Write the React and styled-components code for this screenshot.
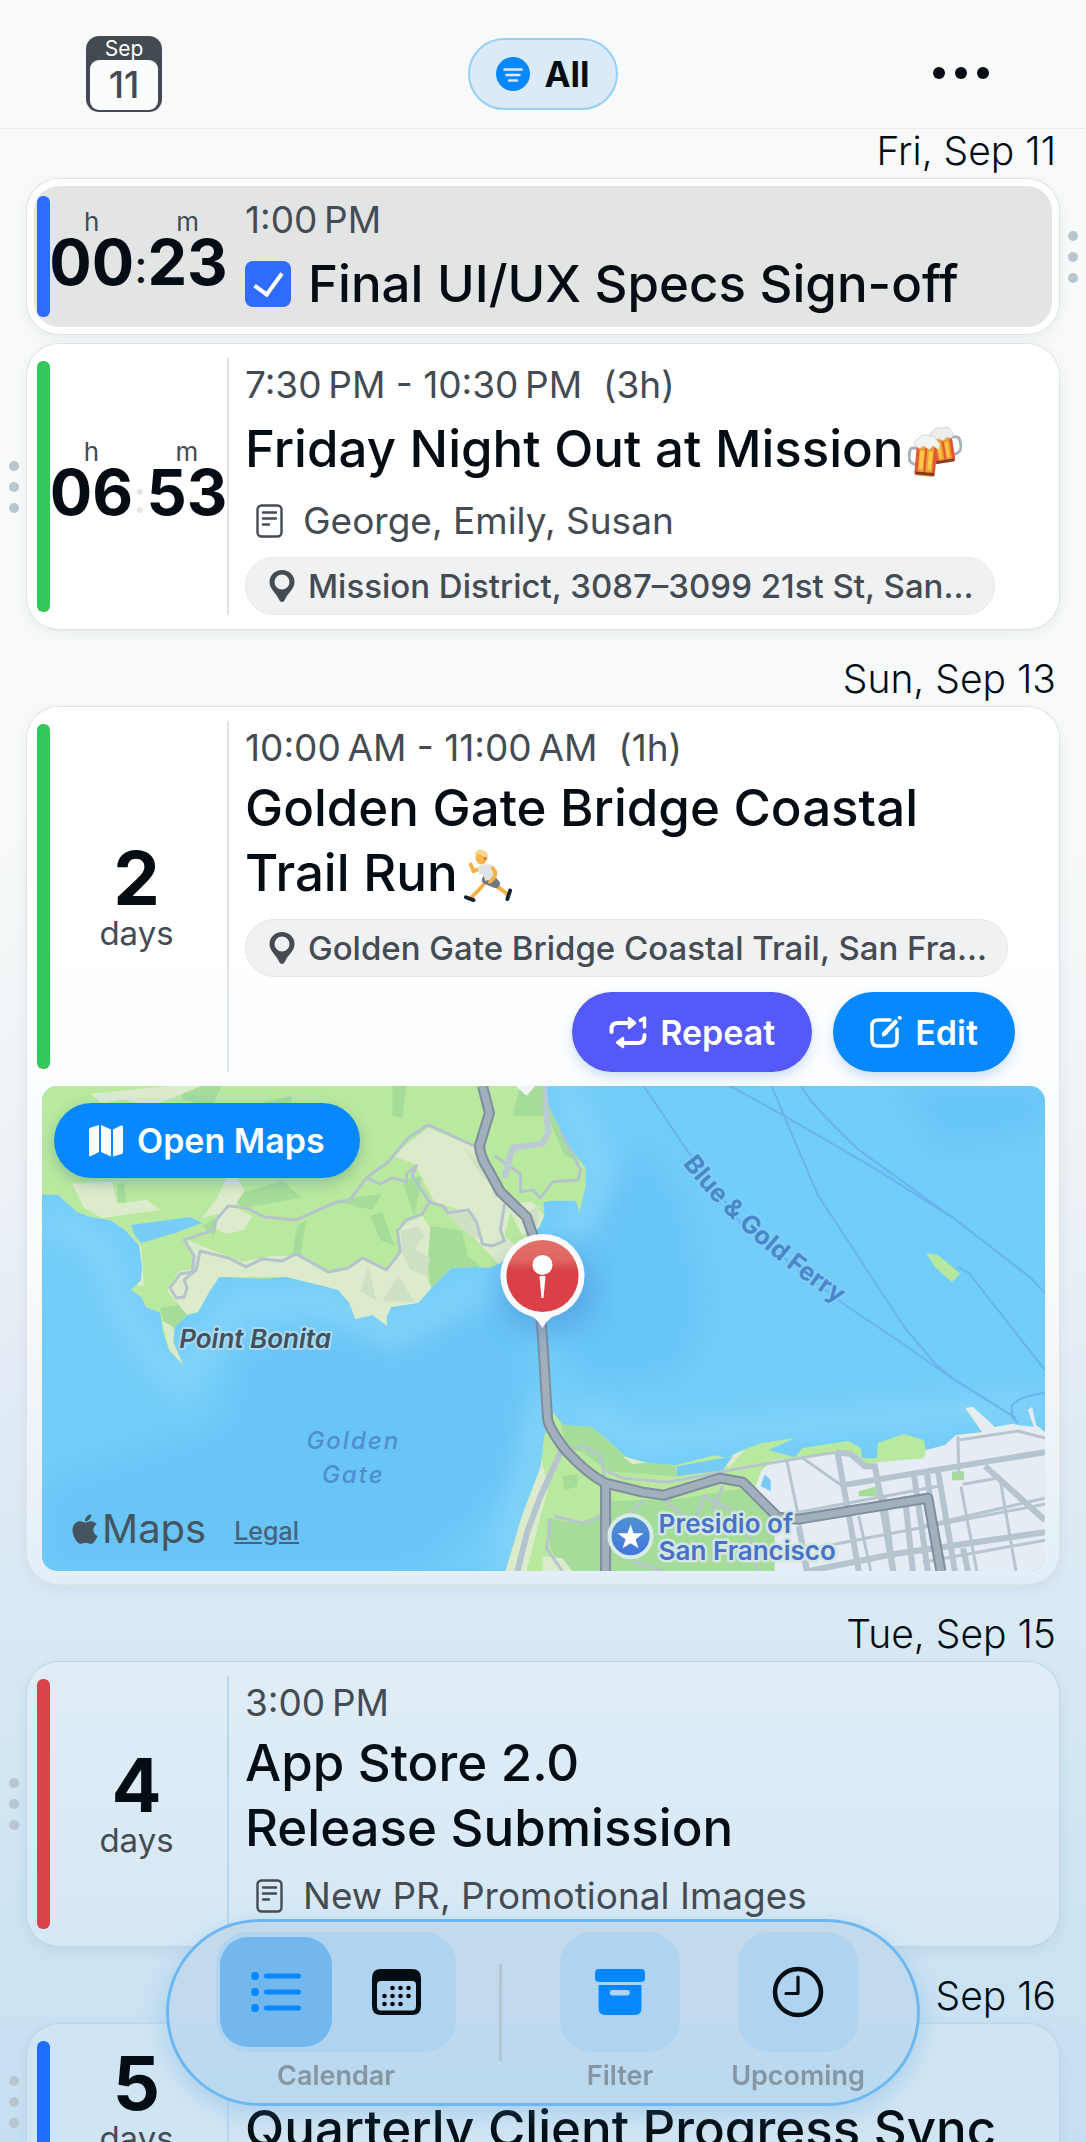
import React, { useState } from "react";
import styled, { createGlobalStyle } from "styled-components";
import { FaApple } from "react-icons/fa";

const BLUE = "#0788ff";
const INK = "#040d14";
const MUTED = "#444b53";

export default function App() {
  //state
  const [view, setView] = useState("list");
  const [isDone, setIsDone] = useState(true);

  //affichage
  return (
    <>
      <GlobalStyle />
      <AppStyled>
        <Header>
          <TodayButton type="button" aria-label="Go to today">
            <span className="month">Sep</span>
            <span className="day">11</span>
          </TodayButton>
          <FilterButton type="button">
            <FilterIcon />
            All
          </FilterButton>
          <MoreButton type="button" aria-label="More">
            <MoreIcon />
          </MoreButton>
        </Header>

        <Agenda>
          <Section>
            <DateTitle>Fri, Sep 11</DateTitle>
            <Event color="#2f6bff" hours="00" minutes="23" tone="done" handle="right">
              <Time>1:00&#8201;PM</Time>
              <Title>
                <CheckLabel>
                  <Checkbox
                    type="checkbox"
                    checked={isDone}
                    onChange={(event) => setIsDone(event.target.checked)}
                  />
                  Final UI/UX Specs Sign-off
                </CheckLabel>
              </Title>
            </Event>
            <Event color="#34c759" hours="06" minutes="53" dimColon handle="left">
              <Time>7:30&#8201;PM - 10:30&#8201;PM&nbsp; (3h)</Time>
              <Title>
                <span>
                  Friday Night Out at Mission
                  <BeersIcon />
                </span>
              </Title>
              <Note>
                <NoteIcon />
                George, Emily, Susan
              </Note>
              <Place href="#mission">
                <PlaceIcon />
                Mission District, 3087–3099 21st St, San...
              </Place>
            </Event>
          </Section>

          <Section>
            <DateTitle>Sun, Sep 13</DateTitle>
            <Event color="#34c759" days="2" tone="fade" footer={<MapPreview />}>
              <Time>10:00&#8201;AM - 11:00&#8201;AM&nbsp; (1h)</Time>
              <Title>
                <span>
                  Golden Gate Bridge Coastal
                  <br />
                  Trail Run
                  <RunnerIcon />
                </span>
              </Title>
              <Place href="#golden-gate">
                <PlaceIcon />
                Golden Gate Bridge Coastal Trail, San Fra...
              </Place>
              <Actions>
                <ActionButton type="button" $color="#5459f7">
                  <RepeatIcon />
                  Repeat
                </ActionButton>
                <ActionButton type="button" $color={BLUE}>
                  <EditIcon />
                  Edit
                </ActionButton>
              </Actions>
            </Event>
          </Section>

          <Section>
            <DateTitle>Tue, Sep 15</DateTitle>
            <Event color="#d9434a" days="4" tone="sky" handle="left">
              <Time>3:00&#8201;PM</Time>
              <Title>
                <span>
                  App Store 2.0
                  <br />
                  Release Submission
                </span>
              </Title>
              <Note $last>
                <NoteIcon />
                New PR, Promotional Images
              </Note>
            </Event>
          </Section>

          <Section>
            <DateTitle>Sep 16</DateTitle>
            <Event color="#1f6dff" days="5" tone="deep" handle="left">
              <Time />
              <Title>Quarterly Client Progress Sync</Title>
            </Event>
          </Section>
        </Agenda>

        <Dock>
          <DockItem>
            <Segmented>
              <Segment
                type="button"
                aria-label="List view"
                $active={view === "list"}
                onClick={() => setView("list")}
              >
                <ListIcon />
              </Segment>
              <Segment
                type="button"
                aria-label="Month view"
                $active={view === "month"}
                onClick={() => setView("month")}
              >
                <MonthIcon />
              </Segment>
            </Segmented>
            Calendar
          </DockItem>
          <DockDivider />
          <DockItem>
            <DockButton type="button" aria-label="Filter">
              <ArchiveIcon />
            </DockButton>
            Filter
          </DockItem>
          <DockItem>
            <DockButton type="button" aria-label="Upcoming">
              <ClockIcon />
            </DockButton>
            Upcoming
          </DockItem>
        </Dock>
      </AppStyled>
    </>
  );
}

function Event({ color, hours, minutes, days, tone, handle, dimColon, footer, children }) {
  return (
    <EventRow>
      <Gutter>{handle === "left" && <Dots />}</Gutter>
      <Card $tone={tone}>
        <CardMain>
          <ColorBar $color={color} />
          {days ? (
            <Days $tone={tone}>
              <strong>{days}</strong>
              <span>days</span>
            </Days>
          ) : (
            <Countdown $tone={tone} $dimColon={dimColon}>
              <div className="clock">
                <div className="unit">
                  <span>h</span>
                  <strong>{hours}</strong>
                </div>
                <i>:</i>
                <div className="unit">
                  <span>m</span>
                  <strong>{minutes}</strong>
                </div>
              </div>
            </Countdown>
          )}
          <Details>{children}</Details>
        </CardMain>
        {footer}
      </Card>
      <Gutter>{handle === "right" && <Dots />}</Gutter>
    </EventRow>
  );
}

function Dots() {
  return (
    <DotsStyled aria-hidden="true">
      <b />
      <b />
      <b />
    </DotsStyled>
  );
}

function MapPreview() {
  return (
    <MapStyled>
      <MapDrawing />
      <OpenMaps type="button">
        <MapIcon />
        Open Maps
      </OpenMaps>
      <MapCredit>
        <FaApple size={34} />
        <span>Maps</span>
        <a href="#legal">Legal</a>
      </MapCredit>
    </MapStyled>
  );
}

function MapDrawing() {
  const marin =
    "M0 0V109H16L35 126L49 131L68 134L83 144L97 159L100 181L99 194L89 204L99 211L104 221L118 227L121 247L127 264L141 279L131 256L133 241L145 229L156 226L167 206L177 191L221 193L244 191L277 199L296 204L307 217L313 233L330 229L345 240L344 231L349 221L376 217L389 202L409 182L432 181L447 182L458 177L470 164L491 147L497 141L502 129L501 117L508 115H533L537 126L543 101V82L527 61L518 44L506 21L504 0Z";
  const city =
    "M511 327L521 339L549 341L565 354L584 371L606 377L633 379L672 369L684 372L700 364L719 357L752 352L726 364L752 371L760 362L805 355L818 362L819 372H834L835 357L861 348L881 354L883 364L902 359L913 349L939 346L922 322L930 321L952 341L969 338L991 341L985 324L989 321L993 339L1002 346V485H463L479 431L498 381L502 349Z";
  const highway =
    "M440 0L447 27L437 60Q438 72 446 84L458 106L484 131L491 151L500 251L505 332Q506 342 523 364Q545 388 563 397L600 406L621 409L677 392L700 396L735 431L756 433L885 412L898 485";

  return (
    <svg viewBox="0 0 1002 485" preserveAspectRatio="xMidYMid slice" role="img" aria-label="Map">
      <defs>
        <clipPath id="marin">
          <path d={marin} />
        </clipPath>
        <clipPath id="city">
          <path d={city} />
        </clipPath>
        <filter id="soft" x="-20%" y="-20%" width="140%" height="140%">
          <feGaussianBlur stdDeviation="14" />
        </filter>
        <linearGradient id="pin" x1="0" y1="0" x2="0" y2="1">
          <stop offset="0" stopColor="#e27069" />
          <stop offset="0.28" stopColor="#e06661" />
          <stop offset="0.42" stopColor="#d94247" />
          <stop offset="1" stopColor="#d94047" />
        </linearGradient>
        <linearGradient id="star" x1="0" y1="0" x2="0" y2="1">
          <stop offset="0" stopColor="#4f94cf" />
          <stop offset="1" stopColor="#4274e0" />
        </linearGradient>
      </defs>

      <rect width="1002" height="485" fill="#71cdf9" />
      <g filter="url(#soft)">
        <path d="M530 130L600 60L640 120L660 220L640 280L560 300L520 270Z" fill="#66c4f6" />
        <path d="M200 260L480 210L490 300L470 400L380 485H0V400L180 340Z" fill="#67c5f6" />
        <path d="M860 0H1002V40L900 60Z" fill="#66c4f6" />
        <g fill="none" stroke="#85d3f9" strokeWidth="26">
          <path d="M0 130L60 160L80 220L110 270L140 300L190 220L280 215L350 250L440 200" />
          <path d="M520 0L560 90L530 150" />
          <path d="M500 310L490 370L460 485" />
          <path d="M530 325L600 355L740 340L860 330L1002 320" />
        </g>
      </g>

      {/* ferry routes */}
      <g fill="none" stroke="#6bb4ef" strokeWidth="2">
        <path d="M601 0L644 64L700 140L805 221L853 253L909 292L973 332" />
        <path d="M729 0L743 34L775 109L862 242L892 277L909 292" />
        <path d="M687 0L745 32L831 82L913 134L988 192L1002 207" />
        <path d="M758 0L769 16Q790 40 816 64L892 119L913 134" />
        <path d="M915 181L926 187L980 256L1002 284" />
        <path d="M1002 307Q975 310 969 320V331L975 337" />
      </g>
      <path d="M883 167L895 169L912 183L917 188L909 196L893 182Z" fill="#b6e89e" />

      {/* marin headlands */}
      <path d={marin} fill="#b9e99f" />
      <g clipPath="url(#marin)">
        <g fill="#a5dc9a">
          <path d="M140 0H180L170 20L140 14ZM350 0H364L360 32L350 30ZM205 20L250 10L246 30ZM478 0H504L518 44L540 76L522 70L505 30L470 30ZM190 110L240 95L260 112L200 122ZM290 115L340 108L330 124ZM328 130L340 126L352 160L338 154ZM255 140L264 134L258 170L250 168Z" />
          <path d="M388 140L420 145L425 170L440 182L409 182L389 202L385 175ZM160 140L178 130L172 150ZM75 100L82 96L84 116H76ZM118 222L160 215L150 232L124 245ZM360 95L380 90L372 130Z" />
        </g>
        <g fill="#dcebcb">
          <path d="M48 8L130 0H160L110 20L80 14L60 18ZM30 98L70 96L75 118L105 114L118 124L60 132L42 122ZM185 90L196 92L202 106L190 124L160 132L175 112ZM176 128L190 120L210 130L202 144L184 148L172 142Z" />
          <path d="M350 70L386 42L434 62L452 100L470 118L462 150L476 162L458 180L430 150L420 125L392 116L372 78Z" />
          <path d="M145 154L165 162L200 176L230 170L258 170L288 186L304 182L318 172L344 182L358 164L356 140L380 130L388 142L384 190L389 202L376 217L349 221L345 240L313 233L296 204L244 191L177 191L156 226L145 229L125 205L136 186L154 182Z" />
          <path d="M462 118L490 116L502 130L496 142L480 150L470 130ZM16 109L35 126L49 131L68 134L83 144L99 160L102 200H96V175L84 154L60 134L30 128ZM120 235L130 240L141 279L127 264Z" />
        </g>
        <g fill="#cfe0c5">
          <path d="M420 60L448 88L456 100L440 92ZM436 68L460 108L452 112ZM400 122L432 128L440 152L428 150L412 136ZM358 145L376 140L382 150L372 162L388 172L384 190L368 184L360 168ZM318 205L326 180L334 215ZM340 215L356 190L372 216ZM480 130L498 118L494 142Z" />
        </g>
        <g fill="none" stroke="#b5c3cd" strokeWidth="3" strokeLinejoin="round">
          <path d="M434 61L386 39L366 52L346 76L324 92L312 108L308 114L292 117L254 134L222 131L204 122L186 120L174 134L172 144L142 154L152 170L150 186L138 188L128 202L134 212L142 211L145 202L142 194L154 184L158 165L186 172L204 181L220 173L240 175L254 168L286 186L306 182L320 172L344 184L358 166L355 145L364 134L380 128L387 116L370 90L374 80L364 88V96L350 92L338 98L324 92" />
          <path d="M387 116L400 120L406 127L426 124L434 136L440 158L450 160L462 155L458 144L462 118M452 70L478 88L478 106L490 104L498 112L510 96L536 94L538 84L518 46" />
        </g>
        <path d="M504 0L503 24L506 46L500 58L470 62L462 92" fill="none" stroke="#bccad6" strokeWidth="6" />
        <path d="M473 0H493L484 10Z" fill="#f1f4f4" />
      </g>
      <path d="M89 139L148 131L160 137L133 147L99 157L92 148Z" fill="#78cdf6" />

      {/* city side */}
      <path d={city} fill="#b9e99f" />
      <g clipPath="url(#city)">
        <path d="M515 325L549 341L584 371L633 379V390L565 385L540 366L524 362Z" fill="#a5dc9a" />
        <path d="M504 432L540 438L560 425V485H520L508 462ZM568 415L640 412L700 402L735 435V485H568ZM520 390L535 388V400L522 404Z" fill="#a5dc9a" />
        <path d="M498 370L506 400L484 485H463L479 431ZM500 470L520 472L530 485H500ZM580 370L606 376L590 378ZM680 368L702 364L686 382Z" fill="#dcebcb" />
        <path d="M719 384L730 374L793 368L805 366L820 378L834 376L881 372L883 364L902 359L913 349L939 346L920 318H1002V485H732V431L713 400Z" fill="#e5ecf3" />
        <path d="M722 388L728 394V405L718 400Z" fill="#76cbf5" />
        <path d="M816 405L834 400V410H816ZM909 385H921V394H909Z" fill="#a5dc9a" />
        <path d="M634 380L690 370L680 384L634 390Z" fill="#76cbf5" />
        <g fill="none" stroke="#b7c5cf" strokeWidth="3">
          <path d="M564 385L580 392L625 396L715 379L793 366M512 430L540 437L560 430M508 432L504 462L520 485M600 414L560 460M620 412L650 438L662 410L690 425M680 400L670 425M744 374L756 432L766 485M760 372L800 400M915 350L916 388M915 354L975 345L1002 352M756 426L895 400M740 438L760 430M760 464L1002 418M816 430L828 485M842 410L852 485M918 400L934 485M957 392L973 485M920 398L954 392M880 440L1002 412M880 476L1002 454M524 364L540 360L558 370L562 390M705 440L715 485M590 475L620 485" />
        </g>
        <g fill="none" stroke="#b5c4cf" strokeWidth="6">
          <path d="M800 399L1002 366M795 368L808 440L816 485M793 366L808 368L822 380H832L838 412L850 485M871 388L885 485M884 386L896 485M895 384L912 485M942 380L1002 434M765 485L850 468L1002 446M920 462L925 485M519 364L498 410L485 445L475 485M756 440L764 485M862 410L870 485" />
        </g>
      </g>

      {/* highway and bridge */}
      <g fill="none" strokeLinejoin="round">
        <path d={highway} stroke="#7f8d9c" strokeWidth="11" />
        <path d="M563 397V485" stroke="#7f8d9c" strokeWidth="11" />
        <path d={highway} stroke="#a2afbd" strokeWidth="7" />
        <path d="M563 397V485" stroke="#a2afbd" strokeWidth="7" />
      </g>

      {/* labels */}
      <g fontFamily="Inter, 'Liberation Sans', sans-serif" paintOrder="stroke" strokeLinejoin="round">
        <path id="ferry" d="M640 78Q706 164 830 240" fill="none" />
        <text fontSize="25" fontWeight="700" fill="#4888c9" stroke="#7fcdf6" strokeWidth="4">
          <textPath href="#ferry">Blue &amp; Gold Ferry</textPath>
        </text>
        <text x="137" y="262" fontSize="26" fontWeight="600" fontStyle="italic" fill="#42505c" stroke="#a9daf3" strokeWidth="4">
          Point Bonita
        </text>
        <g fontSize="24" fontWeight="500" fontStyle="italic" fill="#4f8ed0" textAnchor="middle" letterSpacing="2">
          <text x="311" y="363">Golden</text>
          <text x="311" y="397">Gate</text>
        </g>
        <g fontSize="26" fontWeight="600" fill="#4872c9" stroke="#d3e6e0" strokeWidth="5">
          <text x="616" y="447">Presidio of</text>
          <text x="616" y="474">San Francisco</text>
        </g>
      </g>
      <circle cx="588" cy="450" r="21" fill="url(#star)" stroke="#d9ebe6" strokeWidth="4" />
      <path d="M588 438L591 447H601L593 453L596 462L588 457L580 462L583 453L575 447H585Z" fill="#fff" />

      {/* pin */}
      <ellipse cx="504" cy="204" rx="46" ry="44" fill="#3c78c8" opacity="0.4" filter="url(#soft)" />
      <circle cx="500" cy="190" r="42" fill="#f8fafb" />
      <path d="M476 224Q494 230 500 242Q506 230 524 224Z" fill="#f8fafb" />
      <circle cx="500" cy="190" r="36" fill="url(#pin)" />
      <circle cx="500" cy="179" r="10" fill="#fff" />
      <path d="M497 190H503L501 212H499Z" fill="#fff" />
    </svg>
  );
}

//icônes
const FilterIcon = () => (
  <svg width="34" height="34" viewBox="0 0 34 34">
    <circle cx="17" cy="17" r="17" fill={BLUE} />
    <path d="M8.500 12.500H25.500M10.500 18H23.500M13 23.500H21" stroke="#daeaf6" strokeWidth="2.600" strokeLinecap="round" />
  </svg>
);

const MoreIcon = () => (
  <svg width="58" height="14" viewBox="0 0 58 14" fill={INK}>
    <circle cx="7" cy="7" r="6" />
    <circle cx="29" cy="7" r="6" />
    <circle cx="51" cy="7" r="6" />
  </svg>
);

const NoteIcon = () => (
  <svg width="27" height="34" viewBox="0 0 27 34" fill="none" stroke={MUTED} strokeWidth="2.400" strokeLinecap="round">
    <rect x="1.500" y="1.500" width="24" height="31" rx="4" />
    <path d="M7 8.500H20M7 14.500H20M7 20.500H13" />
  </svg>
);

const PlaceIcon = () => (
  <svg width="26" height="32" viewBox="0 0 26 32" fill={MUTED}>
    <path fillRule="evenodd" d="M13 0C20 0 25.500 5 25.500 12C25.500 19 19 23 16.500 28.500Q15 32 13 32Q11 32 9.500 28.500C7 23 .5 19 .5 12C.5 5 6 0 13 0ZM13 4.500A7.500 7.500 0 1 0 13 19.500A7.500 7.500 0 1 0 13 4.500Z" />
  </svg>
);

const RepeatIcon = () => (
  <svg width="38" height="34" viewBox="0 0 38 34" fill="none" stroke="#fff" strokeWidth="4" strokeLinecap="round" strokeLinejoin="round">
    <path d="M2.500 17V14Q2.500 8 9 8H18M35.500 20V21Q35.500 28 29 28H14" />
    <path d="M20 3V13L26 8ZM14 23V32L8 27.500Z" fill="#fff" strokeWidth="2.500" />
    <path d="M31.500 5.500L35.500 3V12" strokeWidth="3.500" />
  </svg>
);

const EditIcon = () => (
  <svg width="32" height="34" viewBox="0 0 32 34" fill="none" stroke="#fff" strokeLinecap="round">
    <path d="M20 5H8Q2 5 2 11V25Q2 31 8 31H21Q27 31 27 25V14" strokeWidth="3.500" />
    <path d="M14 19L25.500 7" strokeWidth="4.500" />
    <path d="M12.500 21L15 16.500L17 18.500Z" fill="#fff" strokeWidth="1" />
    <path d="M29.500 2.500L30 3" strokeWidth="3.500" />
  </svg>
);

const MapIcon = () => (
  <svg width="34" height="32" viewBox="0 0 34 32" fill="#fff">
    <path d="M0 4.500Q0 3 2 2.500L10 0V27L2 31Q0 32 0 30ZM12 0L22 4.500V31.500L12 27ZM24 4.500L32 .5Q34 0 34 2V27Q34 28.500 32.500 29L24 31.500Z" />
  </svg>
);

const ListIcon = () => (
  <svg width="50" height="42" viewBox="0 0 50 42" stroke={BLUE} strokeWidth="5" strokeLinecap="round">
    <path d="M15.500 5H47.500M15.500 21H47.500M15.500 37H47.500" />
    <g fill={BLUE} stroke="none">
      <circle cx="4" cy="5" r="4" />
      <circle cx="4" cy="21" r="4" />
      <circle cx="4" cy="37" r="4" />
    </g>
  </svg>
);

const MonthIcon = () => (
  <svg width="49" height="46" viewBox="0 0 49 46" fill={INK}>
    <path fillRule="evenodd" d="M9 0H40Q49 0 49 9V37Q49 46 40 46H9Q0 46 0 37V9Q0 0 9 0ZM9 12Q5 12 5 16V37Q5 41.500 9 41.500H40Q44 41.500 44 37V16Q44 12 40 12Z" />
    <g>
      <circle cx="20.500" cy="19" r="2.300" />
      <circle cx="28.500" cy="19" r="2.300" />
      <circle cx="36.500" cy="19" r="2.300" />
      <circle cx="12.500" cy="27" r="2.300" />
      <circle cx="20.500" cy="27" r="2.300" />
      <circle cx="28.500" cy="27" r="2.300" />
      <circle cx="36.500" cy="27" r="2.300" />
      <circle cx="12.500" cy="35" r="2.300" />
      <circle cx="20.500" cy="35" r="2.300" />
      <circle cx="28.500" cy="35" r="2.300" />
    </g>
  </svg>
);

const ArchiveIcon = () => (
  <svg width="50" height="46" viewBox="0 0 50 46" fill={BLUE}>
    <rect width="50" height="13" rx="4" />
    <path fillRule="evenodd" d="M3.500 16H46.500V39Q46.500 46 40 46H10Q3.500 46 3.500 39ZM17.500 21A2.700 2.700 0 0 0 17.500 26.500H32A2.700 2.700 0 0 0 32 21Z" />
  </svg>
);

const ClockIcon = () => (
  <svg width="52" height="52" viewBox="0 0 52 52" fill="none" stroke={INK} strokeLinecap="round" strokeLinejoin="round">
    <circle cx="26" cy="26" r="23" strokeWidth="4.500" />
    <path d="M26 11V27.500H14" strokeWidth="3.200" />
  </svg>
);

const BeersIcon = () => (
  <Emoji viewBox="0 0 56 56" role="img" aria-label="beers">
    <g transform="rotate(-9 38 24)">
      <path d="M46 14H50Q55 14 55 20V24Q55 31 46 32" fill="none" stroke="#a9b2bb" strokeWidth="3" />
      <path d="M26 10H47V36Q47 39 44 39H29Q26 39 26 36Z" fill="#ee9b2c" />
      <path d="M26 12H30V39H26ZM36 14H38V37H36ZM44 14H47V38H44Z" fill="#e0553c" />
      <path d="M31 18H34V34H31ZM39 18H42V34H39Z" fill="#f9c744" />
      <path d="M27 36H46V39H27Z" fill="#8b3c2c" />
      <path d="M25 14Q22 7 29 5Q32 0 38 3Q46 1 47 7Q51 12 46 15L42 13L38 16L32 13L29 16Z" fill="#eceeec" stroke="#cdd2d3" strokeWidth="0.800" />
    </g>
    <g transform="rotate(5 18 36)">
      <path d="M9 25H5Q1 25 1 30V35Q1 41 9 42" fill="none" stroke="#a9b2bb" strokeWidth="3" />
      <path d="M8 20H29V49Q29 53 26 53H11Q8 53 8 49Z" fill="#ef9d2b" />
      <path d="M8 22H11V52H8ZM17 24H19V50H17ZM26 22H29V52H26Z" fill="#e0553c" />
      <path d="M12 27H16V46H12ZM21 27H25V46H21Z" fill="#f9ca48" />
      <path d="M9 49H28V52H9Z" fill="#7e372a" />
      <path d="M7 23Q3 18 9 15Q12 9 19 11Q26 10 28 15Q34 18 30 24L25 21L21 25L15 22L11 25Z" fill="#f3f4f2" stroke="#cdd2d3" strokeWidth="0.800" />
    </g>
  </Emoji>
);

const RunnerIcon = () => (
  <Emoji viewBox="0 0 54 56" role="img" aria-label="runner">
    <g fill="none" strokeLinecap="round" strokeLinejoin="round">
      <path d="M21 37L16 43L9 50" stroke="#f3b246" strokeWidth="4" />
      <path d="M33 38L40 42L46 47" stroke="#f3b246" strokeWidth="4" />
      <path d="M3 50L11 53" stroke="#16222e" strokeWidth="4" />
      <path d="M49 43L46 52" stroke="#16222e" strokeWidth="4" />
      <path d="M16 21L11 23L8 16" stroke="#f3b246" strokeWidth="4" />
      <path d="M24 32L34 36L31 33" stroke="#707983" strokeWidth="9" />
    </g>
    <path d="M15 19Q23 13 32 18L33 31L23 33Q22 26 17 26Z" fill="#dfe3e4" />
    <path d="M31 20Q36 26 31 31L28 34" fill="none" stroke="#f3b246" strokeWidth="4" strokeLinecap="round" />
    <ellipse cx="19" cy="9" rx="6" ry="7" fill="#f6b64a" />
    <path d="M12 6Q14 -1 21 1Q28 4 25 12L22 8Q18 5 12 6Z" fill="#f3d98c" />
    <circle cx="23" cy="10" r="1.500" fill="#e2603c" />
  </Emoji>
);

//styles
const GlobalStyle = createGlobalStyle`
  * {
    box-sizing: border-box;
  }

  body {
    margin: 0;
    font-family: Inter, "Liberation Sans", sans-serif;
    color: ${INK};
  }

  button {
    border: none;
    padding: 0;
    font: inherit;
    color: inherit;
    cursor: pointer;
  }

  svg {
    flex-shrink: 0;
  }
`;

const AppStyled = styled.div`
  height: 100vh;
  overflow: hidden;
  display: flex;
  flex-direction: column;
  background: linear-gradient(#f8faf9 0%, #f8faf9 38%, #eff3f6 52%, #dfeaf4 68%, #d9e9f4 76%, #cce3f2 90%, #c6e0f2 100%);
`;

const Header = styled.header`
  flex-shrink: 0;
  height: 129px;
  padding: 20px 86px 0;
  border-bottom: 1px solid #eceeee;
  display: grid;
  grid-template-columns: 1fr auto 1fr;
  align-items: center;
`;

const TodayButton = styled.button`
  width: 76px;
  height: 76px;
  padding: 0 4px 4px;
  border-radius: 13px;
  background: #444a52;
  display: flex;
  flex-direction: column;

  .month {
    height: 24px;
    line-height: 26px;
    font-size: 21px;
    color: white;
  }

  .day {
    flex: 1;
    border-radius: 9px;
    background: #fbfcfc;
    line-height: 50px;
    font-size: 37px;
    font-weight: 500;
    color: #444a52;
  }
`;

const FilterButton = styled.button`
  height: 72px;
  padding: 0 26px;
  border: 2px solid #96d0f3;
  border-radius: 36px;
  background: #daeaf6;
  display: flex;
  align-items: center;
  gap: 14px;
  font-size: 35px;
  font-weight: 700;
`;

const MoreButton = styled.button`
  justify-self: end;
  margin-right: 10px;
  background: transparent;
`;

const Agenda = styled.main`
  flex: 1;
  overflow-y: auto;
  scrollbar-width: none;
`;

const Section = styled.section`
  display: flex;
  flex-direction: column;
  gap: 10px;

  & + & {
    margin-top: 28px;
  }
`;

const DateTitle = styled.h2`
  margin: 0 30px -4px;
  font-size: 39px;
  font-weight: 300;
  line-height: 44px;
  text-align: right;
`;

const EventRow = styled.article`
  display: flex;
`;

const Gutter = styled.div`
  width: 27px;
  flex-shrink: 0;
  display: flex;
  align-items: center;
  justify-content: center;
`;

const DotsStyled = styled.div`
  display: grid;
  gap: 11px;

  b {
    width: 10px;
    height: 10px;
    border-radius: 50%;
    background: #b7c6cf;
  }
`;

const tones = {
  done: "#e3e5e5",
  fade: "linear-gradient(#ffffff 25%, #f9fcff 50%, #f8fafb 65%, #e2eef7 100%)",
  sky: "linear-gradient(#e0edf7, #d6e8f5)",
  deep: "#d0e5f3",
};

const Card = styled.div`
  flex: 1;
  min-width: 0;
  border-radius: 32px;
  background: ${({ $tone }) => tones[$tone] || "#ffffff"};
  box-shadow:
    ${({ $tone }) => ($tone === "done" ? "inset 0 0 0 7px #ffffff," : "")}
    0 0 0 1px ${({ $tone }) => ($tone === "sky" || $tone === "deep" ? "#bcd5e8" : "#dfe3e6")},
    0 4px 14px rgba(70, 110, 150, 0.1);
`;

const CardMain = styled.div`
  display: flex;
  padding: 14px 14px 14px 10px;
`;

const ColorBar = styled.div`
  width: 13px;
  margin: 3px 0;
  border-radius: 6px;
  flex-shrink: 0;
  background: ${({ $color }) => $color};
`;

const lines = { done: "transparent", sky: "#b8d8ee", deep: "#b8d8ee" };

const Days = styled.div`
  width: 179px;
  flex-shrink: 0;
  padding: 8px 4px 0 0;
  border-right: 2px solid ${({ $tone }) => lines[$tone] || "#e1e4e7"};
  display: flex;
  flex-direction: column;
  align-items: center;
  justify-content: center;

  strong {
    font-size: 74px;
    font-weight: 700;
    line-height: 64px;
  }

  span {
    font-size: 33px;
    line-height: 46px;
    color: ${MUTED};
  }
`;

const Countdown = styled.div`
  width: 179px;
  flex-shrink: 0;
  padding-bottom: 26px;
  border-right: 2px solid ${({ $tone }) => lines[$tone] || "#e1e4e7"};
  display: flex;
  align-items: center;
  justify-content: center;

  .clock {
    display: flex;
    align-items: flex-end;
  }

  .unit {
    display: flex;
    flex-direction: column;
    align-items: center;
  }

  span {
    font-size: 26px;
    line-height: 36px;
    color: ${MUTED};
  }

  strong {
    font-size: 63px;
    font-weight: 700;
    line-height: 44px;
  }

  i {
    font-size: 46px;
    font-style: normal;
    line-height: 36px;
    color: ${({ $dimColon }) => ($dimColon ? "#e3e6e8" : INK)};
  }
`;

const Details = styled.div`
  flex: 1;
  min-width: 0;
  padding: 5px 0 0 16px;
  display: flex;
  flex-direction: column;
  align-items: flex-start;
`;

const Time = styled.div`
  min-height: 44px;
  font-size: 37px;
  line-height: 44px;
  color: ${MUTED};
`;

const Title = styled.h3`
  min-height: 73px;
  margin: 5px 0 0;
  display: flex;
  align-items: center;
  font-size: 51px;
  font-weight: 500;
  line-height: 65px;
  white-space: nowrap;
`;

const CheckLabel = styled.label`
  display: flex;
  align-items: center;
  gap: 17px;
`;

const Checkbox = styled.input`
  appearance: none;
  width: 46px;
  height: 46px;
  margin: 0;
  border-radius: 8px;
  background: #2f6bff;
  display: grid;
  place-items: center;

  &:checked::after {
    content: "";
    width: 13px;
    height: 24px;
    margin-bottom: 6px;
    border: solid white;
    border-width: 0 4px 4px 0;
    transform: rotate(36deg);
  }
`;

const Emoji = styled.svg`
  width: 54px;
  height: 54px;
  margin-left: 4px;
  vertical-align: -12px;
`;

const Note = styled.div`
  margin: 14px 0 ${({ $last }) => ($last ? 14 : 0)}px 11px;
  display: flex;
  align-items: center;
  gap: 20px;
  font-size: 37px;
  line-height: 44px;
  color: ${MUTED};
`;

const Place = styled.a`
  height: 58px;
  margin-top: 14px;
  padding: 0 20px 0 23px;
  border: 1px solid #e4e7e9;
  border-radius: 29px;
  background: #f0f1f3;
  display: flex;
  align-items: center;
  gap: 13px;
  font-size: 33px;
  font-weight: 500;
  color: ${MUTED};
  text-decoration: none;
  white-space: nowrap;
`;

const Actions = styled.div`
  align-self: flex-end;
  margin: 15px 30px 0 0;
  display: flex;
  gap: 21px;
`;

const ActionButton = styled.button`
  height: 80px;
  padding: 0 37px;
  border-radius: 40px;
  background: ${({ $color }) => $color};
  box-shadow: 0 5px 12px rgba(60, 130, 200, 0.25);
  display: flex;
  align-items: center;
  gap: 13px;
  font-size: 34px;
  font-weight: 600;
  color: white;
`;

const MapStyled = styled.div`
  position: relative;
  height: 485px;
  margin: 0 14px 13px 15px;
  border-radius: 15px;
  overflow: hidden;

  > svg {
    display: block;
    width: 100%;
    height: 100%;
  }
`;

const OpenMaps = styled.button`
  position: absolute;
  top: 17px;
  left: 12px;
  height: 75px;
  padding: 0 35px;
  border-radius: 38px;
  background: ${BLUE};
  box-shadow: 0 5px 14px rgba(40, 100, 120, 0.3);
  display: flex;
  align-items: center;
  gap: 14px;
  font-size: 34px;
  font-weight: 600;
  color: white;
`;

const MapCredit = styled.div`
  position: absolute;
  bottom: 18px;
  left: 26px;
  display: flex;
  align-items: center;
  color: #46545f;

  span {
    font-size: 40px;
    line-height: 48px;
  }

  a {
    margin: 4px 0 0 28px;
    font-size: 25px;
    font-weight: 500;
    color: #46637e;
  }
`;

const Dock = styled.nav`
  position: fixed;
  bottom: 36px;
  left: 50%;
  transform: translateX(-50%);
  padding: 10px 51px 10px 47px;
  border: 3px solid #6cb7f1;
  border-radius: 94px;
  background: linear-gradient(#c3daeb, #c2d9ed 40%, #b8d9f0);
  box-shadow: 0 8px 24px rgba(70, 150, 220, 0.28);
  display: flex;
  align-items: flex-start;
`;

const DockItem = styled.div`
  min-width: 136px;
  display: flex;
  flex-direction: column;
  align-items: center;
  gap: 7px;
  font-size: 27px;
  font-weight: 600;
  line-height: 34px;
  color: #8595a2;

  & + & {
    margin-left: 42px;
  }
`;

const Segmented = styled.div`
  height: 120px;
  padding: 5px 4px;
  border-radius: 32px;
  background: #b0d4ef;
  display: flex;
  gap: 8px;
`;

const Segment = styled.button`
  width: 112px;
  border-radius: 28px;
  background: ${({ $active }) => ($active ? "#72b8ef" : "transparent")};
  display: grid;
  place-items: center;
`;

const DockDivider = styled.div`
  width: 3px;
  height: 97px;
  margin: 32px 50px 0 43px;
  background: #b3c6d3;
`;

const DockButton = styled.button`
  width: 120px;
  height: 120px;
  border-radius: 32px;
  background: #b0d4ef;
  display: grid;
  place-items: center;
`;
